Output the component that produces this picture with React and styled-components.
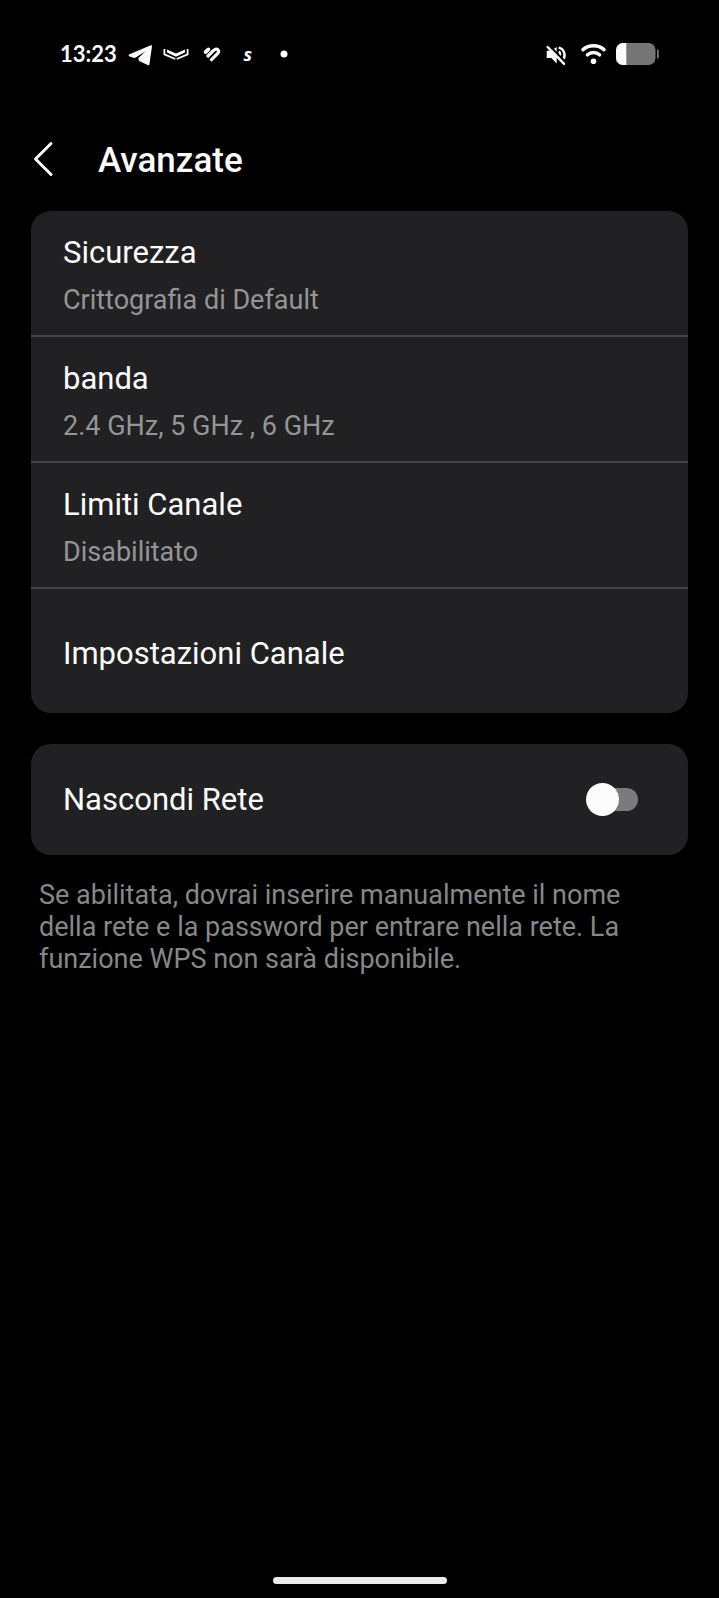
import { useState } from 'react';
import styled, { createGlobalStyle } from 'styled-components';

const Color = {
  background: '#000000',
  card: '#212123',
  divider: '#454547',
  white: '#fcfcfc',
  grey: '#959597',
  note: '#878787',
  track: '#7b7b7d',
  battery: '#757575',
};

const GlobalStyle = createGlobalStyle`
  * {
    box-sizing: border-box;
  }
  body {
    margin: 0;
    background: ${Color.background};
    color: ${Color.white};
    font-family: Roboto, 'Liberation Sans', sans-serif;
  }
`;

const Screen = styled.div`
  display: flex;
  flex-direction: column;
  min-height: 100vh;
`;

const StatusBar = styled.div`
  display: flex;
  align-items: center;
  justify-content: space-between;
  height: 107px;
  padding: 0 60px;
`;

const StatusGroup = styled.div`
  display: flex;
  align-items: center;
  gap: 10px;
`;

const Clock = styled.span`
  font-family: Lato, sans-serif;
  font-size: 22px;
  font-weight: 700;
  line-height: 26px;
`;

const StatusIcon = styled.svg`
  display: block;
  width: ${(props) => props.$width || 26}px;
  height: 26px;
  fill: ${Color.white};
`;

const LetterIcon = styled.span`
  width: 26px;
  font-family: 'Open Sans', sans-serif;
  font-size: 18px;
  font-style: italic;
  font-weight: 700;
  line-height: 26px;
  text-align: center;
`;

const Header = styled.header`
  display: flex;
  align-items: center;
  gap: 36px;
  height: 104px;
  padding: 0 24px;
`;

const BackButton = styled.button`
  display: flex;
  padding: 0;
  border: none;
  background: none;
  cursor: pointer;

  svg {
    width: 38px;
    height: 38px;
    fill: none;
    stroke: ${Color.white};
    stroke-width: 3;
    stroke-linecap: round;
    stroke-linejoin: round;
  }
`;

const PageTitle = styled.h1`
  margin: 0;
  padding-top: 3px;
  font-size: 35px;
  font-weight: 500;
  line-height: 42px;
`;

const Content = styled.main`
  display: flex;
  flex: 1;
  flex-direction: column;
  padding: 0 31px;
`;

const Card = styled.section`
  margin-bottom: ${(props) => props.$bottom}px;
  border-radius: 20px;
  background: ${Color.card};
  overflow: hidden;
`;

const Row = styled.button`
  display: flex;
  flex-direction: column;
  justify-content: center;
  gap: 13px;
  width: 100%;
  min-height: 126px;
  padding: 24px 32px 19px;
  border: none;
  border-bottom: solid 2px ${Color.divider};
  background: none;
  color: inherit;
  font-family: inherit;
  text-align: left;
  cursor: pointer;

  &:last-child {
    min-height: 124px;
    border-bottom: none;
  }
`;

const RowTitle = styled.span`
  font-size: 31px;
  line-height: 36px;
`;

const RowValue = styled.span`
  color: ${Color.grey};
  font-size: 27px;
  line-height: 32px;
`;

const SwitchRow = styled.label`
  display: flex;
  align-items: center;
  justify-content: space-between;
  height: 111px;
  padding: 0 50px 0 32px;
  cursor: pointer;
`;

const Switch = styled.input`
  display: grid;
  align-items: center;
  width: 52px;
  height: 33px;
  margin: 0;
  appearance: none;
  cursor: pointer;

  &::before,
  &::after {
    content: '';
    grid-area: 1 / 1;
  }
  &::before {
    height: 23px;
    margin-left: 6px;
    border-radius: 12px;
    background: ${Color.track};
  }
  &::after {
    width: 33px;
    height: 33px;
    border-radius: 50%;
    background: ${Color.white};
  }
  &:checked::after {
    justify-self: end;
  }
`;

const Note = styled.p`
  margin: 0;
  padding: 0 8px;
  color: ${Color.note};
  font-size: 27px;
  line-height: 32px;
`;

const HomeBar = styled.div`
  width: 174px;
  height: 7px;
  margin: 0 auto 14px;
  border-radius: 4px;
  background: #ececec;
`;

const items = [
  { title: 'Sicurezza', value: 'Crittografia di Default' },
  { title: 'banda', value: '2.4 GHz, 5 GHz , 6 GHz' },
  { title: 'Limiti Canale', value: 'Disabilitato' },
  { title: 'Impostazioni Canale' },
];

const Notifications = () => (
  <StatusGroup>
    <Clock>13:23</Clock>
    {/* telegram */}
    <StatusIcon viewBox="0 0 26 26">
      <path d="M2 13.6 23.8 4.2q1.4-.3 1.2 1L22.4 23.4q-.5 1.4-1.8.7L12.2 20 11.2 17.2 18.6 10.2 8.8 16.4Q7.7 17.1 6.5 16.8L2 15.2Q1 14.4 2 13.6Z" />
    </StatusIcon>
    {/* winged badge */}
    <StatusIcon viewBox="0 0 26 26">
      <path
        d="M1.4 8v5.4L12.3 18M24.6 8v5.4L13.7 18"
        fill="none"
        stroke={Color.white}
        strokeWidth="1.8"
      />
      <path d="M4 8.6 13 12.4 22 8.6v2.9L13 15.7 4 11.5Z" />
    </StatusIcon>
    {/* striped heart */}
    <StatusIcon viewBox="0 0 26 26">
      <g fill="none" stroke={Color.white} strokeWidth="3.2" strokeLinecap="round">
        <path d="m6.6 11 2.8-2.6" strokeWidth="3.8" />
        <path d="m8.9 15 5.5-5.4c3.7-3.4 6.8 0 4.1 3.1l-6 6" />
      </g>
    </StatusIcon>
    <LetterIcon>s</LetterIcon>
    <StatusIcon viewBox="0 0 26 26">
      <circle cx="13" cy="13" r="3.5" />
    </StatusIcon>
  </StatusGroup>
);

const SystemIcons = () => (
  <StatusGroup>
    {/* muted speaker */}
    <StatusIcon viewBox="0 0 26 26">
      <path d="M2.7 9.8h4.5L12.7 6v16.5L7.2 17H2.7Z" />
      <path
        d="M14.8 10.4c1.8 1.2 1.8 4.6 0 5.8M14.6 6.6c6.2 1.3 7.4 8.5 4.3 12"
        fill="none"
        stroke={Color.white}
        strokeWidth="2.4"
      />
      <path d="M5.4 4.7 22 21.5" stroke={Color.background} strokeWidth="2" />
      <path d="m3.6 6 16.5 16.9" stroke={Color.white} strokeWidth="2.4" strokeLinecap="round" />
    </StatusIcon>
    {/* wifi */}
    <StatusIcon viewBox="0 0 26 26">
      <path
        d="M3 8.6c6-5 15-5 21 0M7.5 13.8c3.4-3 8.6-3 12 0"
        fill="none"
        stroke={Color.white}
        strokeWidth="3.5"
        strokeLinecap="round"
      />
      <circle cx="13.5" cy="20.2" r="2.8" />
    </StatusIcon>
    {/* battery */}
    <StatusIcon $width={43} viewBox="0 0 43 26">
      <rect y="2" width="39.5" height="22" rx="7" fill={Color.battery} />
      <path d="M10.3 2H7a7 7 0 0 0-7 7v8a7 7 0 0 0 7 7h3.3Z" />
      <path d="M41 8.5h.5a1.3 1.3 0 0 1 1.3 1.3v6.4a1.3 1.3 0 0 1-1.3 1.3H41Z" fill={Color.battery} />
    </StatusIcon>
  </StatusGroup>
);

export default function App() {
  const [hidden, setHidden] = useState(false);

  return (
    <Screen>
      <GlobalStyle />
      <StatusBar>
        <Notifications />
        <SystemIcons />
      </StatusBar>
      <Header>
        <BackButton type="button" aria-label="Indietro">
          <svg viewBox="0 0 38 38">
            <path d="M27 3.5 11.5 19 27 34.5" />
          </svg>
        </BackButton>
        <PageTitle>Avanzate</PageTitle>
      </Header>
      <Content>
        <Card $bottom={31}>
          {items.map((item) => (
            <Row type="button" key={item.title}>
              <RowTitle>{item.title}</RowTitle>
              {item.value && <RowValue>{item.value}</RowValue>}
            </Row>
          ))}
        </Card>
        <Card $bottom={24}>
          <SwitchRow>
            <RowTitle>Nascondi Rete</RowTitle>
            <Switch
              type="checkbox"
              role="switch"
              checked={hidden}
              onChange={(e) => setHidden(e.target.checked)}
            />
          </SwitchRow>
        </Card>
        <Note>
          Se abilitata, dovrai inserire manualmente il nome della rete e la password per entrare
          nella rete. La funzione WPS non sarà disponibile.
        </Note>
      </Content>
      <HomeBar />
    </Screen>
  );
}
